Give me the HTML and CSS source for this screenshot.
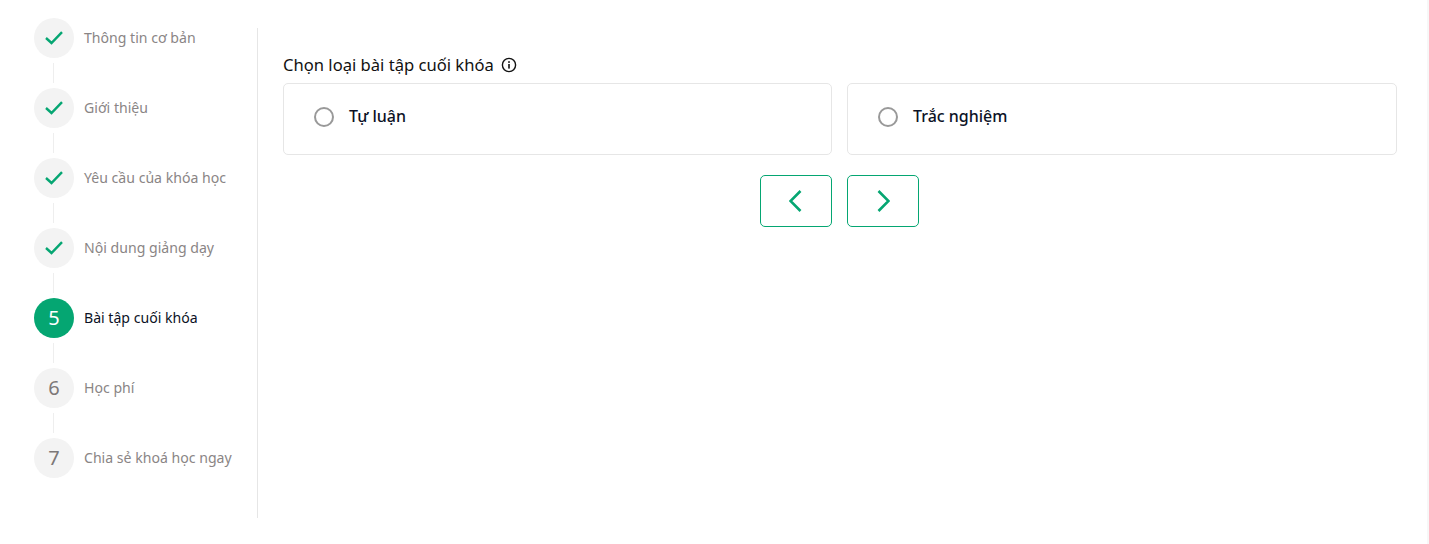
FILE: index.html
```html
<!DOCTYPE html>
<html lang="en">
<head>
  <meta charset="UTF-8">
  <title>Bài tập cuối khóa</title>
  <link rel="stylesheet" href="styles.css">
</head>
<body>

  <div class="page">
    <ul class="steps">
      <li class="step done">
        <span class="circle"><svg width="18" height="14" viewBox="0 0 18 14"><path d="M1 7 L6.5 12 L17 1.2" fill="none" stroke="#05a672" stroke-width="2.4"/></svg></span>
        <span class="step-name">Thông tin cơ bản</span>
      </li>
      <li class="step done">
        <span class="circle"><svg width="18" height="14" viewBox="0 0 18 14"><path d="M1 7 L6.5 12 L17 1.2" fill="none" stroke="#05a672" stroke-width="2.4"/></svg></span>
        <span class="step-name">Giới thiệu</span>
      </li>
      <li class="step done">
        <span class="circle"><svg width="18" height="14" viewBox="0 0 18 14"><path d="M1 7 L6.5 12 L17 1.2" fill="none" stroke="#05a672" stroke-width="2.4"/></svg></span>
        <span class="step-name">Yêu cầu của khóa học</span>
      </li>
      <li class="step done">
        <span class="circle"><svg width="18" height="14" viewBox="0 0 18 14"><path d="M1 7 L6.5 12 L17 1.2" fill="none" stroke="#05a672" stroke-width="2.4"/></svg></span>
        <span class="step-name">Nội dung giảng dạy</span>
      </li>
      <li class="step active">
        <span class="circle">5</span>
        <span class="step-name">Bài tập cuối khóa</span>
      </li>
      <li class="step">
        <span class="circle">6</span>
        <span class="step-name">Học phí</span>
      </li>
      <li class="step">
        <span class="circle">7</span>
        <span class="step-name">Chia sẻ khoá học ngay</span>
      </li>
    </ul>

    <div class="content">
      <div class="title">
        Chọn loại bài tập cuối khóa
        <svg width="16" height="16" viewBox="0 0 16 16"><circle cx="8" cy="8" r="6.6" fill="none" stroke="#111" stroke-width="1.4"/><rect x="7.2" y="7" width="1.6" height="4.6" fill="#111"/><rect x="7.2" y="4.2" width="1.6" height="1.7" fill="#111"/></svg>
      </div>

      <div class="options">
        <div class="option first"><span class="radio"></span>Tự luận</div>
        <div class="option"><span class="radio"></span>Trắc nghiệm</div>
      </div>

      <div class="nav">
        <button class="nav-btn"><svg width="14" height="24" viewBox="0 0 14 24"><path d="M11.5 2 L1.5 12 L11.5 22" fill="none" stroke="#05a672" stroke-width="2.6"/></svg></button>
        <button class="nav-btn"><svg width="14" height="24" viewBox="0 0 14 24"><path d="M2.5 2 L12.5 12 L2.5 22" fill="none" stroke="#05a672" stroke-width="2.6"/></svg></button>
      </div>
    </div>
  </div>

</body>
</html>
```

FILE: styles.css
```css
* {
  box-sizing: border-box;
}

body {
  margin: 0;
  height: 544px;
  overflow: hidden;
  background-color: #ffffff;
  font-family: "Noto Sans", Arial, sans-serif;
  border-right: 2px solid #f7f7f7;
}

.page {
  display: flex;
  align-items: flex-start;
  padding: 18px 30px 0 34px;
}

.steps {
  list-style: none;
  margin: 0;
  padding: 0;
  width: 223px;
  flex-shrink: 0;
}

.step {
  display: flex;
  align-items: center;
  gap: 10px;
  height: 40px;
  margin-bottom: 30px;
  position: relative;
  font-size: 14.1px;
  color: #8a8585;
}

.step:not(:last-child)::after {
  content: "";
  position: absolute;
  left: 19px;
  top: 45px;
  width: 1px;
  height: 20px;
  background-color: #eeeeee;
}

.circle {
  width: 40px;
  height: 40px;
  border-radius: 50%;
  background-color: #f3f3f3;
  display: flex;
  justify-content: center;
  align-items: center;
  padding-bottom: 1px;
  font-size: 20px;
  color: #7d7878;
  flex-shrink: 0;
}

.step-name {
  position: relative;
  top: -1px;
}

.active {
  color: #0c1226;
}

.active .circle {
  background-color: #05a672;
  color: #ffffff;
}

.content {
  flex: 1;
  margin-top: 10px;
  height: 490px;
  border-left: 1px solid #e6e6e6;
  padding: 21px 0 0 25px;
}

.title {
  display: flex;
  align-items: center;
  gap: 7px;
  height: 34px;
  padding-bottom: 3px;
  font-size: 16.6px;
  color: #111111;
}

.options {
  display: flex;
  gap: 15px;
}

.option {
  flex: 1;
  height: 72px;
  border: 1px solid #e6e6e6;
  border-radius: 5px;
  display: flex;
  align-items: center;
  padding: 0 0 6px 30px;
  gap: 15px;
  font-size: 16px;
  font-weight: 500;
  color: #0c1226;
}

.option.first {
  flex: 0 0 549px;
}

.radio {
  width: 20px;
  height: 20px;
  border: 2px solid #999999;
  border-radius: 50%;
  position: relative;
  top: 1px;
}

.nav {
  display: flex;
  justify-content: center;
  gap: 15px;
  margin-top: 20px;
  padding-right: 1px;
}

.nav-btn {
  width: 72px;
  height: 52px;
  background-color: #ffffff;
  border: 1px solid #05a672;
  border-radius: 5px;
  padding: 0;
  display: flex;
  justify-content: center;
  align-items: center;
  cursor: pointer;
}
```
